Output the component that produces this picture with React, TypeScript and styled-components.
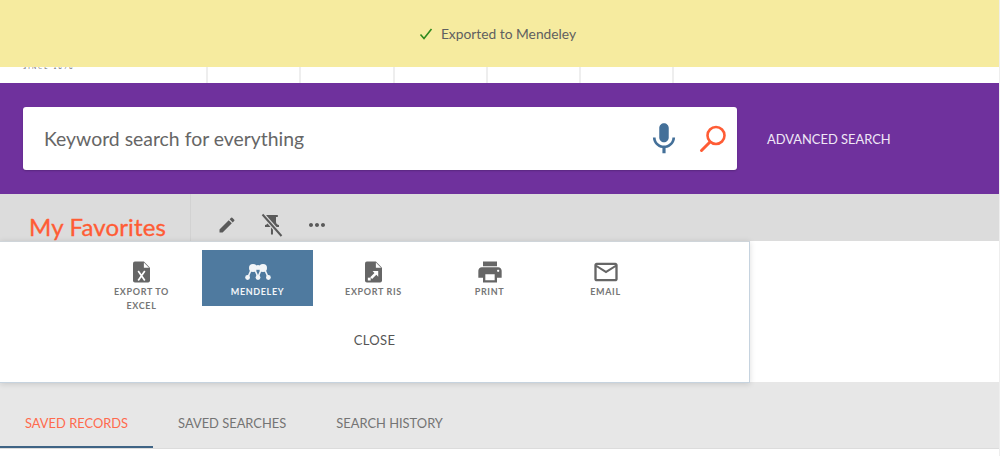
import styled, { createGlobalStyle } from 'styled-components'
import { MdEdit, MdMailOutline, MdMic, MdMoreHoriz, MdPrint, MdPushPin } from 'react-icons/md'

const GlobalStyle = createGlobalStyle`
  html, body {
    margin: 0;
    padding: 0;
    background: #fff;
    font-family: 'Lato', 'Noto Sans', sans-serif;
  }
  * { box-sizing: border-box; }
`

const Page = styled.div`
  position: relative;
  width: 1000px;
  height: 456px;
  overflow: hidden;
  border-right: 1px solid #eee;
`

const Banner = styled.div`
  position: absolute;
  top: 0;
  left: 0;
  right: 0;
  height: 67px;
  padding-right: 4px;
  background: #f6eb9f;
  display: flex;
  align-items: center;
  justify-content: center;
  gap: 8px;
  color: #5f6060;
  font-size: 13.8px;
  z-index: 2;
`

const TopNav = styled.div`
  display: flex;
  height: 83px;
  background: #fff;
`

const Logo = styled.div`
  width: 208px;
  padding: 64px 0 0 23px;
  font-size: 5.5px;
  letter-spacing: 2.2px;
  line-height: 7px;
  color: #666;
  border-right: 2px solid #eee;
`

const NavCell = styled.div`
  width: 93.3px;
  border-right: 2px solid #eee;
`

const SearchBand = styled.div`
  display: flex;
  align-items: center;
  height: 111px;
  background: #6f319d;
  padding: 0 0 0 23px;
`

const SearchBox = styled.div`
  display: flex;
  align-items: center;
  width: 714px;
  height: 63px;
  padding: 0 9px 0 21px;
  background: #fff;
  border-radius: 3px;
  box-shadow: 0 1px 2px rgba(0, 0, 0, 0.2);
`

const Keyword = styled.span`
  flex: 1;
  font-size: 19.4px;
  color: #666;
`

const MicIcon = styled(MdMic)`
  width: 38px;
  height: 38px;
  color: #447099;
  margin-right: 15px;
`

const AdvancedLink = styled.a`
  margin-left: 30px;
  font-size: 12.9px;
  color: #f0e8f6;
`

const TitleBar = styled.div`
  display: flex;
  height: 47px;
  background: #dcdcdc;
`

const Title = styled.h1`
  width: 191px;
  margin: 0;
  padding: 17px 0 0 29px;
  font-size: 24px;
  line-height: 32px;
  font-weight: 400;
  letter-spacing: 0.15px;
  -webkit-text-stroke: 0.35px #ff5c35;
  color: #ff5c35;
  white-space: nowrap;
  border-right: 1px solid #d2d2d2;
`

const TitleActions = styled.div`
  display: flex;
  align-items: center;
  padding: 14px 0 0 24px;
  color: #5a5a5a;
`

const IconSlot = styled.span`
  display: flex;
  justify-content: center;
  width: 24px;
  margin-right: 21px;
`

const ContentArea = styled.div`
  height: 141px;
  background: #fff;
`

const SharePanel = styled.div`
  position: relative;
  width: 750px;
  height: 142px;
  padding: 8px 0 0 86px;
  background: #fff;
  border-top: 1px solid #cfd5da;
  border-right: 1px solid #c6d3df;
  border-bottom: 1px solid #c6d3df;
  box-shadow: 0 1px 6px rgba(0, 0, 0, 0.14);
`

const ActionRow = styled.div`
  display: flex;
  gap: 5px;
`

const ActionItem = styled.div<{ $active?: boolean }>`
  width: 111px;
  height: 56px;
  padding: 11px 26px 0;
  text-align: center;
  font-size: 9px;
  font-weight: 700;
  letter-spacing: 0.65px;
  line-height: 14px;
  color: ${(p) => (p.$active ? '#f2f5f8' : '#767676')};
  background: ${(p) => (p.$active ? '#4f7a9f' : 'transparent')};
`

const ActionIcon = styled.div`
  display: flex;
  justify-content: center;
  align-items: center;
  height: 22px;
  margin-bottom: 2px;
  color: #666;
`

const CloseButton = styled.div`
  margin: 25px 0 0 -86px;
  text-align: center;
  font-size: 13px;
  letter-spacing: 0.3px;
  line-height: 18px;
  color: #555;
`

const TabBar = styled.div`
  display: flex;
  height: 67px;
  background: #e7e7e7;
  border-bottom: 1px solid #dcdcdc;
`

const Tab = styled.div<{ $active?: boolean }>`
  display: flex;
  align-items: center;
  height: 66px;
  padding: 18px 25px 0;
  font-size: 12.9px;
  white-space: nowrap;
  color: ${(p) => (p.$active ? '#ff6a4d' : '#747474')};
  border-bottom: 2px solid ${(p) => (p.$active ? '#3f6485' : 'transparent')};
`

const CheckIcon = () => (
  <svg width="14" height="14" viewBox="0 0 14 14" fill="none">
    <path d="M1.5 7.5 5 11.5 12.5 2" stroke="#2f8a1f" strokeWidth="1.6" />
  </svg>
)

const SearchIcon = () => (
  <svg width="30" height="30" viewBox="0 0 30 30" fill="none" stroke="#ff5c35">
    <circle cx="18" cy="11.5" r="8.5" strokeWidth="2.6" />
    <path d="M12 18 3.5 26.5" strokeWidth="3" strokeLinecap="round" />
  </svg>
)

const PinOffIcon = () => (
  <svg width="24" height="24" viewBox="0 0 24 24" fill="none">
    <MdPushPin size={24} color="#5a5a5a" />
    <path d="M2.5 1.5 21.5 23" stroke="#dcdcdc" strokeWidth="4.4" />
    <path d="M2.5 1.5 21.5 23" stroke="#5a5a5a" strokeWidth="2" />
  </svg>
)

const ExcelIcon = () => (
  <svg width="17" height="22" viewBox="0 0 18 22">
    <path d="M2 0h9.5L18 6.5V20a2 2 0 0 1-2 2H2a2 2 0 0 1-2-2V2a2 2 0 0 1 2-2z" fill="#666" />
    <path d="M11.5 1v5.5H17z" fill="#fff" />
    <path d="M5.5 10 12.5 20M12.5 10 5.5 20" stroke="#fff" strokeWidth="1.8" />
  </svg>
)

const RisIcon = () => (
  <svg width="17" height="22" viewBox="0 0 18 22">
    <path d="M2 0h9.5L18 6.5V20a2 2 0 0 1-2 2H2a2 2 0 0 1-2-2V2a2 2 0 0 1 2-2z" fill="#666" />
    <path d="M11.5 1v5.5H17z" fill="#fff" />
    <path d="M8 10h6v6l-2-2-4.5 4.5-2-2L10 12z" fill="#fff" />
    <rect x="3" y="17" width="3" height="3" fill="#fff" />
  </svg>
)

const MendeleyIcon = () => (
  <svg width="26" height="18" viewBox="0 0 26 18" fill="#f2f5f8">
    <circle cx="8" cy="5" r="4" />
    <circle cx="18" cy="5" r="4" />
    <circle cx="13" cy="4.5" r="2.4" />
    <circle cx="2.6" cy="14.5" r="2.4" />
    <circle cx="13" cy="14.5" r="2.4" />
    <circle cx="23.4" cy="14.5" r="2.4" />
    <path d="M3 14 6.5 6M23 14 19.5 6M10 7l3 7 3-7" stroke="#f2f5f8" strokeWidth="1.6" fill="none" />
  </svg>
)

const actions = [
  { label: 'EXPORT TO EXCEL', icon: <ExcelIcon /> },
  { label: 'MENDELEY', icon: <MendeleyIcon />, active: true },
  { label: 'EXPORT RIS', icon: <RisIcon /> },
  { label: 'PRINT', icon: <MdPrint size={28} /> },
  { label: 'EMAIL', icon: <MdMailOutline size={28} /> },
]

const App = () => {
  return (
    <Page>
      <GlobalStyle />
      <Banner>
        <CheckIcon />
        Exported to Mendeley
      </Banner>
      <TopNav>
        <Logo>SINCE 1878</Logo>
        <NavCell />
        <NavCell />
        <NavCell />
        <NavCell />
        <NavCell />
      </TopNav>
      <SearchBand>
        <SearchBox>
          <Keyword>Keyword search for everything</Keyword>
          <MicIcon />
          <SearchIcon />
        </SearchBox>
        <AdvancedLink>ADVANCED SEARCH</AdvancedLink>
      </SearchBand>
      <TitleBar>
        <Title>My Favorites</Title>
        <TitleActions>
          <IconSlot>
            <MdEdit size={20} />
          </IconSlot>
          <IconSlot>
            <PinOffIcon />
          </IconSlot>
          <IconSlot>
            <MdMoreHoriz size={24} />
          </IconSlot>
        </TitleActions>
      </TitleBar>
      <ContentArea>
        <SharePanel>
          <ActionRow>
            {actions.map((action) => (
              <ActionItem key={action.label} $active={action.active}>
                <ActionIcon>{action.icon}</ActionIcon>
                {action.label}
              </ActionItem>
            ))}
          </ActionRow>
          <CloseButton>CLOSE</CloseButton>
        </SharePanel>
      </ContentArea>
      <TabBar>
        <Tab $active>SAVED RECORDS</Tab>
        <Tab>SAVED SEARCHES</Tab>
        <Tab>SEARCH HISTORY</Tab>
      </TabBar>
    </Page>
  )
}

export default App
